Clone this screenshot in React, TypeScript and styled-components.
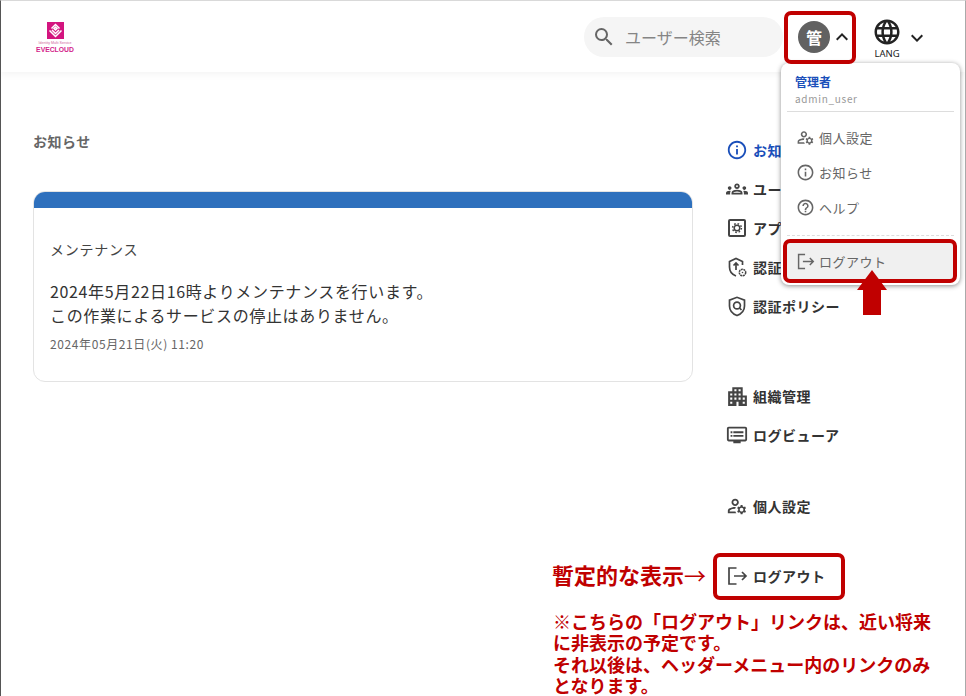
import styled, { createGlobalStyle } from 'styled-components';
import {
    MdApartment,
    MdHelpOutline,
    MdInfoOutline,
    MdKeyboardArrowDown,
    MdKeyboardArrowUp,
    MdLanguage,
    MdOutlineDvr,
    MdOutlineGroups,
    MdOutlineManageAccounts,
    MdSearch,
} from 'react-icons/md';
import type { ReactNode } from 'react';

const RED = '#c00000';

const GlobalStyle = createGlobalStyle`
    html, body {
        margin: 0;
        padding: 0;
        background: #fff;
    }
    body {
        font-family: "Noto Sans CJK JP", "Noto Sans", sans-serif;
        color: #333;
    }
`;

const Page = styled.div`
    position: relative;
    width: 966px;
    height: 696px;
    box-sizing: border-box;
    overflow: hidden;
    background: #fff;
    border-top: 1px solid #d9d9d9;
    border-left: 1px solid #555;
    border-right: 1px solid #aaa;
`;

const Header = styled.header`
    display: flex;
    align-items: center;
    height: 71px;
    box-sizing: border-box;
    padding: 0 28px 0 35px;
    box-shadow: 0 2px 8px rgba(0, 0, 0, 0.05);
`;

const Logo = styled.div`
    display: flex;
    flex-direction: column;
    align-items: center;
    width: 38px;
    margin-top: 2px;
`;

const LogoSmall = styled.span`
    font-family: "Liberation Sans", sans-serif;
    font-size: 3.6px;
    line-height: 5px;
    white-space: nowrap;
    color: #d0679b;
    margin-top: 2px;
`;

const LogoName = styled.span`
    font-family: "Liberation Sans", sans-serif;
    font-size: 6.8px;
    line-height: 7px;
    font-weight: 700;
    color: #d3248a;
`;

const Search = styled.div`
    display: flex;
    align-items: center;
    gap: 9px;
    width: 199px;
    height: 40px;
    box-sizing: border-box;
    margin-left: auto;
    padding-left: 8px;
    background: #f5f5f5;
    border-radius: 20px;
    font-size: 16px;
    color: #858585;
    svg {
        font-size: 24px;
        color: #666;
    }
`;

const UserButton = styled.div`
    display: flex;
    align-items: center;
    width: 64px;
    margin-left: 15px;
    svg {
        font-size: 24px;
        color: #222;
    }
`;

const Avatar = styled.div`
    display: flex;
    align-items: center;
    justify-content: center;
    width: 32px;
    height: 32px;
    border-radius: 50%;
    background: #616161;
    color: #fff;
    font-size: 16px;
    font-weight: 700;
`;

const LangButton = styled.div`
    display: flex;
    align-items: center;
    margin-left: 10px;
    width: 65px;
    > svg {
        font-size: 24px;
        color: #222;
        margin-left: 3px;
        margin-top: 2px;
    }
`;

const LangStack = styled.div`
    display: flex;
    flex-direction: column;
    align-items: center;
    width: 30px;
    margin-top: 5px;
    font-family: "Noto Sans", sans-serif;
    font-size: 9.5px;
    line-height: 14px;
    color: #222;
    svg {
        font-size: 30px;
        color: #222;
    }
`;

const Body = styled.div`
    display: flex;
`;

const Main = styled.main`
    flex: 1;
    padding: 59px 33px 0 32px;
`;

const Title = styled.h1`
    margin: 0 0 40px;
    height: 20px;
    font-size: 14px;
    line-height: 20px;
    font-weight: 700;
    letter-spacing: 0.5px;
    color: #666;
`;

const Card = styled.section`
    border: 1px solid #e3e3e3;
    border-radius: 12px;
    height: 191px;
    box-sizing: border-box;
    overflow: hidden;
`;

const CardBar = styled.div`
    height: 16px;
    background: #2e70bd;
`;

const CardBody = styled.div`
    padding: 31px 16px 0;
`;

const CardTitle = styled.div`
    font-size: 14px;
    line-height: 20px;
    letter-spacing: 0.75px;
    color: #444;
    margin-bottom: 20px;
`;

const CardText = styled.p`
    margin: 0 0 9px;
    font-size: 16px;
    line-height: 24px;
    letter-spacing: 0.65px;
    color: #333;
`;

const CardDate = styled.div`
    font-size: 12px;
    line-height: 16px;
    letter-spacing: 0.6px;
    color: #666;
`;

const SideNav = styled.nav`
    display: flex;
    flex-direction: column;
    width: 239px;
    box-sizing: border-box;
    padding: 59px 0 0 0;
`;

const NavGroup = styled.div<{ $gap: number }>`
    display: flex;
    flex-direction: column;
    margin-bottom: ${(p) => p.$gap}px;
`;

const NavItem = styled.a<{ $active?: boolean }>`
    display: flex;
    align-items: center;
    gap: 5px;
    height: 38.8px;
    font-size: 14px;
    font-weight: 700;
    letter-spacing: 0.5px;
    white-space: nowrap;
    color: ${(p) => (p.$active ? '#1a4fba' : '#333')};
    svg {
        flex: none;
        width: 22px;
        height: 22px;
        color: ${(p) => (p.$active ? '#1a4fba' : '#444')};
    }
`;

const BuildingIcon = styled(MdApartment)`
    && {
        width: 25px;
        height: 25px;
        margin: 0 -1.5px;
    }
`;

const Menu = styled.div`
    position: absolute;
    top: 62px;
    left: 780px;
    width: 179px;
    height: 222px;
    box-sizing: border-box;
    padding: 10px 6px 0;
    background: #fff;
    border-radius: 8px;
    box-shadow: 0 1px 5px rgba(0, 0, 0, 0.45);
`;

const MenuUser = styled.div`
    padding: 0 8px 4px;
    border-bottom: 1px solid #ddd;
`;

const MenuRole = styled.div`
    font-size: 12px;
    line-height: 18px;
    font-weight: 700;
    color: #1a4fba;
`;

const MenuLogin = styled.div`
    font-size: 10px;
    line-height: 16px;
    letter-spacing: 0.7px;
    color: #999;
`;

const MenuList = styled.div`
    display: flex;
    flex-direction: column;
    padding: 8px 0 10px;
    border-bottom: 1px dashed #ddd;
`;

const MenuItem = styled.div`
    display: flex;
    align-items: center;
    gap: 4px;
    height: 35px;
    padding-left: 9px;
    font-size: 13px;
    letter-spacing: 0.5px;
    color: #666;
    svg {
        width: 19px;
        height: 19px;
        color: #666;
    }
`;

const MenuLogout = styled(MenuItem)`
    height: 37px;
    margin-top: 7px;
    background: #f0f0f0;
`;

const Frame = styled.div<{ $x: number; $y: number; $w: number; $h: number }>`
    position: absolute;
    left: ${(p) => p.$x}px;
    top: ${(p) => p.$y}px;
    width: ${(p) => p.$w}px;
    height: ${(p) => p.$h}px;
    box-sizing: border-box;
    border: 4px solid ${RED};
    border-radius: 7px;
    pointer-events: none;
`;

const Arrow = styled.svg`
    position: absolute;
    left: 855px;
    top: 268px;
`;

const Caption = styled.div`
    position: absolute;
    left: 551px;
    top: 557px;
    font-size: 22px;
    line-height: 32px;
    font-weight: 700;
    white-space: nowrap;
    color: ${RED};
`;

const CaptionArrow = styled.span`
    font-weight: 400;
`;

const Note = styled.div`
    position: absolute;
    left: 552px;
    top: 610px;
    width: 400px;
    font-size: 18px;
    line-height: 21.25px;
    font-weight: 700;
    color: ${RED};
`;

function LogoMark() {
    return (
        <svg width="17" height="17" viewBox="0 0 17 17">
            <rect width="17" height="17" fill="#d3147f" />
            <g fill="none" stroke="#fff" strokeWidth="1.5">
                <path d="M2.5 8.5 8.5 14.5 14.5 8.5" />
                <path d="M5 8 8.5 11.5 12 8" />
                <path d="M4.5 6.5 8.5 2.5 12.5 6.5" />
                <path d="M7 6.5 8.5 5 10 6.5 8.5 8z" />
            </g>
        </svg>
    );
}

function LogoutIcon() {
    return (
        <svg viewBox="0 0 22 22" fill="none" stroke="currentColor" strokeWidth="1.7">
            <path d="M10.5 3H3v16h7.5" />
            <path d="M8 11h12M16 7l4 4-4 4" />
        </svg>
    );
}

function AppIcon() {
    return (
        <svg viewBox="0 0 22 22" fill="none" stroke="currentColor">
            <rect x="3" y="3" width="16" height="16" rx="1" strokeWidth="2" />
            <circle cx="11" cy="11" r="2.8" strokeWidth="1.5" />
            <circle cx="11" cy="11" r="4.4" strokeWidth="1.5" strokeDasharray="1.6 1.86" />
        </svg>
    );
}

function ShieldGear() {
    return (
        <svg viewBox="0 0 22 22" fill="none" stroke="currentColor" strokeWidth="1.7">
            <path d="M10 20C6 18.5 3.5 15.5 3.5 11V5.5L10 2.5l6.5 3V9" />
            <path d="M10 14V7M7.5 9.5 10 7l2.5 2.5" />
            <circle cx="16.5" cy="16.5" r="3.2" strokeWidth="1.5" strokeDasharray="2 0.6" />
            <circle cx="16.5" cy="16.5" r="0.8" fill="currentColor" stroke="none" />
        </svg>
    );
}

function ShieldSearch() {
    return (
        <svg viewBox="0 0 22 22" fill="none" stroke="currentColor" strokeWidth="1.7">
            <path d="M11 20.5C7 19 3.5 16 3.5 11V5.2L11 2.3l7.5 2.9V11c0 5-3.5 8-7.5 9.5z" />
            <circle cx="11" cy="10.5" r="3.4" />
            <path d="m13.5 13 2 2" />
        </svg>
    );
}

type NavEntry = { icon: ReactNode; label: string; active?: boolean };

const navGroups: { gap: number; items: NavEntry[] }[] = [
    {
        gap: 52,
        items: [
            { icon: <MdInfoOutline />, label: 'お知らせ', active: true },
            { icon: <MdOutlineGroups />, label: 'ユーザー管理' },
            { icon: <AppIcon />, label: 'アプリ管理' },
            { icon: <ShieldGear />, label: '認証管理' },
            { icon: <ShieldSearch />, label: '認証ポリシー' },
        ],
    },
    {
        gap: 32,
        items: [
            { icon: <BuildingIcon />, label: '組織管理' },
            { icon: <MdOutlineDvr />, label: 'ログビューア' },
        ],
    },
    {
        gap: 31,
        items: [{ icon: <MdOutlineManageAccounts />, label: '個人設定' }],
    },
    {
        gap: 0,
        items: [{ icon: <LogoutIcon />, label: 'ログアウト' }],
    },
];

export default function App() {
    return (
        <Page>
            <GlobalStyle />
            <Header>
                <Logo>
                    <LogoMark />
                    <LogoSmall>Identity Multi Service</LogoSmall>
                    <LogoName>EVECLOUD</LogoName>
                </Logo>
                <Search>
                    <MdSearch />
                    ユーザー検索
                </Search>
                <UserButton>
                    <Avatar>管</Avatar>
                    <MdKeyboardArrowUp />
                </UserButton>
                <LangButton>
                    <LangStack>
                        <MdLanguage />
                        LANG
                    </LangStack>
                    <MdKeyboardArrowDown />
                </LangButton>
            </Header>
            <Body>
                <Main>
                    <Title>お知らせ</Title>
                    <Card>
                        <CardBar />
                        <CardBody>
                            <CardTitle>メンテナンス</CardTitle>
                            <CardText>
                                2024年5月22日16時よりメンテナンスを行います。
                                <br />
                                この作業によるサービスの停止はありません。
                            </CardText>
                            <CardDate>2024年05月21日(火) 11:20</CardDate>
                        </CardBody>
                    </Card>
                </Main>
                <SideNav>
                    {navGroups.map((group) => (
                        <NavGroup key={group.items[0].label} $gap={group.gap}>
                            {group.items.map((item) => (
                                <NavItem key={item.label} $active={item.active}>
                                    {item.icon}
                                    {item.label}
                                </NavItem>
                            ))}
                        </NavGroup>
                    ))}
                </SideNav>
            </Body>
            <Menu>
                <MenuUser>
                    <MenuRole>管理者</MenuRole>
                    <MenuLogin>admin_user</MenuLogin>
                </MenuUser>
                <MenuList>
                    <MenuItem>
                        <MdOutlineManageAccounts />
                        個人設定
                    </MenuItem>
                    <MenuItem>
                        <MdInfoOutline />
                        お知らせ
                    </MenuItem>
                    <MenuItem>
                        <MdHelpOutline />
                        ヘルプ
                    </MenuItem>
                </MenuList>
                <MenuLogout>
                    <LogoutIcon />
                    ログアウト
                </MenuLogout>
            </Menu>
            <Frame $x={783} $y={10} $w={72} $h={53} />
            <Frame $x={782} $y={238} $w={174} $h={44} />
            <Frame $x={712} $y={552} $w={132} $h={47} />
            <Arrow width="32" height="47" viewBox="0 0 32 47">
                <path d="M16 1 31 21H25V46H7V21H1z" fill={RED} />
            </Arrow>
            <Caption>
                暫定的な表示<CaptionArrow>→</CaptionArrow>
            </Caption>
            <Note>
                ※こちらの「ログアウト」リンクは、近い将来
                <br />
                に非表示の予定です。
                <br />
                それ以後は、ヘッダーメニュー内のリンクのみ
                <br />
                となります。
            </Note>
        </Page>
    );
}
